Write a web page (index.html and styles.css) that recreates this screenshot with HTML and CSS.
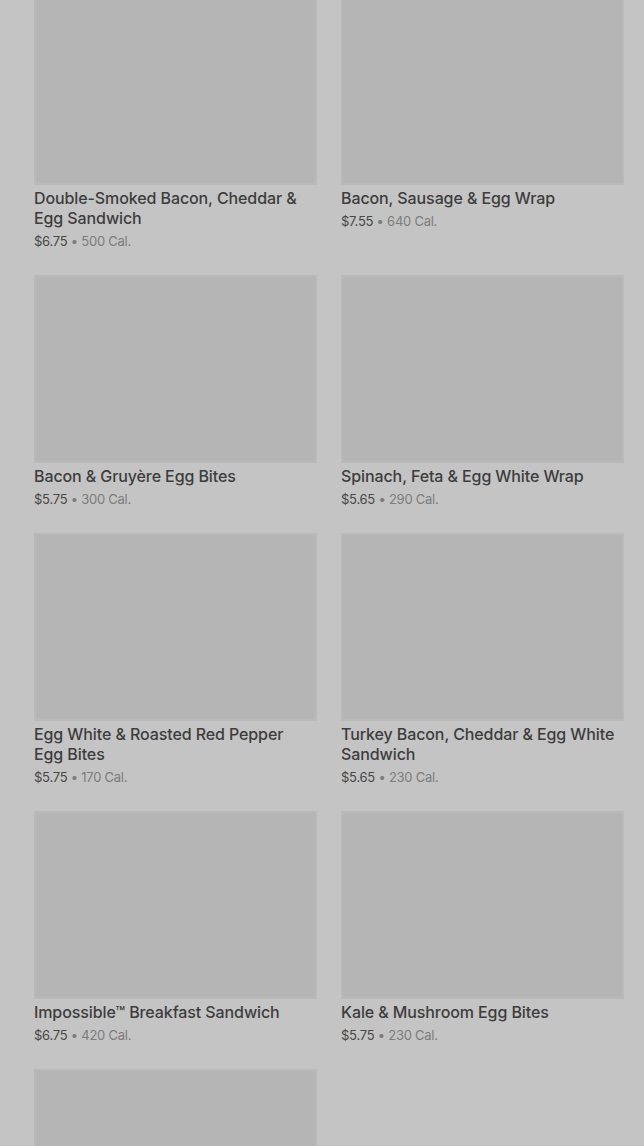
FILE: index.html
```html
<!DOCTYPE html>
<html lang="en">
<head>
  <meta charset="UTF-8">
  <meta name="viewport" content="width=device-width, initial-scale=1.0">
  <title>Hot Breakfast</title>
  <link rel="stylesheet" href="styles.css">
</head>
<body>

  <div class="menu-grid">
    <div class="item">
      <div class="thumb"></div>
      <h3>Double-Smoked Bacon, Cheddar &amp; Egg Sandwich</h3>
      <p class="meta">$6.75 <span class="cal">• 500 Cal.</span></p>
    </div>
    <div class="item">
      <div class="thumb"></div>
      <h3>Bacon, Sausage &amp; Egg Wrap</h3>
      <p class="meta">$7.55 <span class="cal">• 640 Cal.</span></p>
    </div>

    <div class="item">
      <div class="thumb"></div>
      <h3>Bacon &amp; Gruyère Egg Bites</h3>
      <p class="meta">$5.75 <span class="cal">• 300 Cal.</span></p>
    </div>
    <div class="item">
      <div class="thumb"></div>
      <h3>Spinach, Feta &amp; Egg White Wrap</h3>
      <p class="meta">$5.65 <span class="cal">• 290 Cal.</span></p>
    </div>

    <div class="item">
      <div class="thumb"></div>
      <h3>Egg White &amp; Roasted Red Pepper Egg Bites</h3>
      <p class="meta">$5.75 <span class="cal">• 170 Cal.</span></p>
    </div>
    <div class="item">
      <div class="thumb"></div>
      <h3>Turkey Bacon, Cheddar &amp; Egg White Sandwich</h3>
      <p class="meta">$5.65 <span class="cal">• 230 Cal.</span></p>
    </div>

    <div class="item">
      <div class="thumb"></div>
      <h3>Impossible™ Breakfast Sandwich</h3>
      <p class="meta">$6.75 <span class="cal">• 420 Cal.</span></p>
    </div>
    <div class="item">
      <div class="thumb"></div>
      <h3>Kale &amp; Mushroom Egg Bites</h3>
      <p class="meta">$5.75 <span class="cal">• 230 Cal.</span></p>
    </div>

    <div class="item">
      <div class="thumb"></div>
    </div>
  </div>

</body>
</html>
```

FILE: styles.css
```css
* { box-sizing: border-box; }

body {
  margin: 0;
  padding: 0;
  font-family: Inter, Roboto, 'Liberation Sans', sans-serif;
  background: #c4c4c4;
  color: #3d3d3d;
  overflow: hidden;
}

.menu-grid {
  display: grid;
  grid-template-columns: 283px 283px;
  column-gap: 24px;
  padding-left: 34px;
  margin-top: -3px;
}

.item {
  padding-bottom: 25px;
}

.thumb {
  height: 188px;
  background: #b5b5b5;
  box-shadow: inset 0 0 0 2px #b9b9b9;
}

h3 {
  margin: 3px 0 4px;
  padding-right: 4px;
  font-size: 16px;
  line-height: 20px;
  font-weight: 500;
  letter-spacing: -0.1px;
  color: #3d3d3d;
}

.meta {
  margin: 0;
  font-size: 13px;
  line-height: 18px;
  letter-spacing: -0.25px;
  color: #474747;
}

.cal {
  color: #7c7c7c;
}
```
